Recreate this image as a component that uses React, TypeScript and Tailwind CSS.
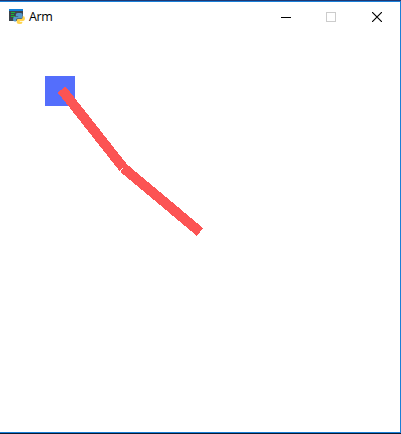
function PythonWindowIcon() {
  return (
    <svg width="16" height="16" viewBox="0 0 16 16" aria-hidden="true">
      <rect x="0" y="0" width="14" height="12" fill="#3d444b" />
      <rect x="0" y="0" width="14" height="2" fill="#1280d8" />
      <path d="M2 3.5h4M2 5.5h3M2 7.5h4" stroke="#18b535" strokeWidth="1" />
      <path d="M8.8 4H11.6q2 0 2 1.7v2.4q0 1.5-1.4 1.5H8.8Q7.2 9.6 7.2 11v1.6H5.8Q4 12.6 4 10.2t1.8-2.4h3.4v-.6H6.8V5.8Q6.8 4 8.8 4Z" fill="#5598ca" />
      <path d="M13.6 7.2h.8q1.6 0 1.6 2.4t-1.8 2.4h-3.4v.8h2.6v.7q0 1.5-2.7 1.5T7.7 13.4v-2q0-1.4 1.6-1.4h2.8q1.5 0 1.5-1.4Z" fill="#ffd44e" />
    </svg>
  );
}

function TitleBar() {
  return (
    <header className="flex h-[30px] shrink-0 items-center justify-between pl-[9px]">
      <div className="flex items-center gap-1">
        <PythonWindowIcon />
        <span className="font-['Open_Sans','Noto_Sans',sans-serif] text-[12.5px] leading-4 tracking-[-0.4px] text-black">
          Arm
        </span>
      </div>
      <div className="flex">
        <button aria-label="Minimize" className="flex h-[30px] w-[45px] items-center justify-center pl-px">
          <svg width="10" height="11" shapeRendering="crispEdges">
            <path d="M0 5.5h10" stroke="#000" />
          </svg>
        </button>
        <button aria-label="Maximize" disabled className="flex h-[30px] w-[46px] items-center justify-center">
          <svg width="10" height="10" shapeRendering="crispEdges">
            <rect x=".5" y=".5" width="9" height="9" fill="none" stroke="#ccc" />
          </svg>
        </button>
        <button aria-label="Close" className="flex h-[30px] w-[46px] items-center justify-center">
          <svg width="10" height="10">
            <path d="M0 0l10 10M10 0L0 10" stroke="#000" strokeWidth="1.15" />
          </svg>
        </button>
      </div>
    </header>
  );
}

function ArmCanvas() {
  return (
    <svg className="block" width="400" height="400" viewBox="0 32 400 400" shapeRendering="crispEdges">
      <rect x="45" y="76" width="30" height="30" fill="#546efc" />
      <g stroke="#fc5454" strokeWidth="10">
        <path d="M61.7 89.5L123.5 168" />
        <path d="M123.5 168L200 232" />
      </g>
      <path d="M120 170h1v-1h1v1h-1v1h-1zM122 168h1v1h-1z" fill="#fff" />
    </svg>
  );
}

export default function App() {
  return (
    <div className="h-[434px] w-[401px] overflow-hidden border-t border-b border-t-[#203873] border-b-[#061a33] bg-white">
      <div className="flex h-[432px] flex-col border-t border-r border-b border-[#1a7fd7]">
        <TitleBar />
        <ArmCanvas />
      </div>
    </div>
  );
}
